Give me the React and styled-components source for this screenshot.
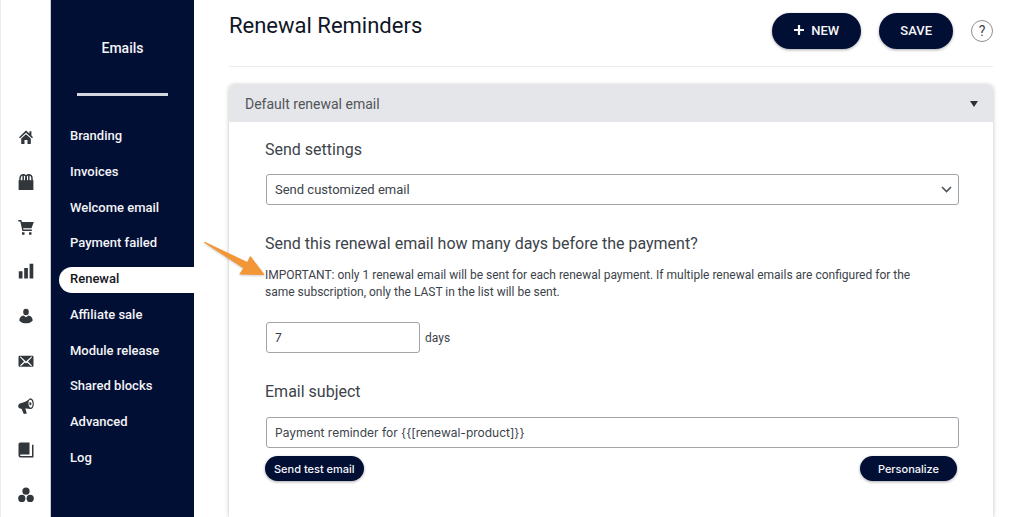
import React, { useState } from 'react';
import styled, { createGlobalStyle } from 'styled-components';

const navy = '#020f35';
const ink = '#3c434a';
const sans = `Roboto, 'Liberation Sans', sans-serif`;
const inter = `Inter, Roboto, sans-serif`;

const GlobalStyle = createGlobalStyle`
  *, *::before, *::after { box-sizing: border-box; }
  body { margin: 0; background: #fff; color: ${ink}; font-family: ${sans}; font-size: 12px; }
  h1, h2, h3, p, ul { margin: 0; padding: 0; }
  ul { list-style: none; }
`;

const Page = styled.div`
  display: grid;
  grid-template-columns: 51px 143px minmax(0, 1fr);
  min-height: 100vh;
`;

const Rail = styled.nav`
  border-left: 1px solid #ececee;
  border-right: 1px solid #c9ccd2;
  padding-top: 129px;
`;

const RailList = styled.ul`
  display: flex;
  flex-direction: column;
  justify-content: space-between;
  align-items: center;
  height: 374px;
`;

const RailLink = styled.a`
  display: block;
  width: 16px;
  height: 16px;
  color: #32373c;

  svg { display: block; width: 16px; height: 16px; fill: currentColor; }
`;

const Sidebar = styled.aside`
  background: ${navy};
  color: #f3f4f6;
  padding-top: 38px;
`;

const SidebarTitle = styled.h2`
  font-size: 14px;
  font-weight: 500;
  line-height: 20px;
  text-align: center;
`;

const SidebarRule = styled.div`
  height: 3px;
  margin: 35px 26px 28px;
  background: #d3d6dc;
`;

const MenuList = styled.ul`
  display: flex;
  flex-direction: column;
  justify-content: space-between;
  height: 348px;
  padding-left: 8px;
`;

const MenuLink = styled.a`
  display: block;
  height: 26px;
  padding-left: 11px;
  border-radius: 13px 0 0 13px;
  background: ${(p) => (p.$active ? '#fff' : 'transparent')};
  color: ${(p) => (p.$active ? '#15171c' : '#f3f4f6')};
  font-size: 13px;
  font-weight: 500;
  line-height: 24px;
  text-decoration: none;
`;

const Main = styled.main`
  display: flex;
  flex-direction: column;
  padding: 0 31px 0 35px;
`;

const Header = styled.header`
  display: flex;
  justify-content: space-between;
  height: 67px;
  padding-top: 12px;
  border-bottom: 1px solid #ebebed;
`;

const Title = styled.h1`
  font-size: 22px;
  font-weight: 400;
  line-height: 28px;
  color: #101626;
`;

const Actions = styled.div`
  display: flex;
  align-items: center;
  gap: 18px;
  height: 37px;
`;

const Pill = styled.button`
  display: inline-flex;
  align-items: center;
  justify-content: center;
  gap: 7px;
  height: ${(p) => (p.$small ? '25px' : '36px')};
  padding: 0 ${(p) => p.$pad}px;
  border: 0;
  border-radius: 18px;
  background: ${navy};
  color: #f6f7f9;
  font-family: ${(p) => (p.$small ? inter : sans)};
  font-size: ${(p) => (p.$small ? '11px' : '13px')};
  font-weight: 500;
  box-shadow: 0 1px 3px rgba(0, 0, 0, 0.35);
  cursor: pointer;
`;

const Help = styled.button`
  width: 22px;
  height: 22px;
  padding: 0;
  border: 1px solid #8c8f94;
  border-radius: 50%;
  background: #fff;
  color: ${ink};
  font-family: ${sans};
  font-size: 14px;
  line-height: 20px;
`;

const Card = styled.section`
  flex: 1;
  margin-top: 18px;
  border-radius: 5px 5px 0 0;
  box-shadow: 0 0 4px rgba(0, 0, 0, 0.25);
`;

const CardHeader = styled.button`
  display: flex;
  align-items: center;
  justify-content: space-between;
  width: 100%;
  height: 37px;
  padding: 0 15px 0 16px;
  border: 0;
  border-radius: 5px 5px 0 0;
  background: #e5e6e9;
  color: #50555b;
  font-family: ${sans};
  font-size: 14px;
  cursor: pointer;
`;

const CardBody = styled.div`
  padding: 18px 34px 32px 36px;
`;

const Label = styled.label`
  display: block;
  font-size: 16px;
  line-height: 20px;
  color: ${ink};
`;

const Field = styled.input`
  display: block;
  width: ${(p) => (p.$short ? '154px' : '100%')};
  height: 31px;
  padding: 0 8px;
  border: 1px solid #a0a3a8;
  border-radius: 3px;
  background: #fff;
  color: ${ink};
  font-family: ${inter};
  font-size: 12px;
`;

const FieldRow = styled.div`
  display: flex;
  align-items: center;
  gap: 5px;
  margin: ${(p) => p.$space};
  padding-left: 1px;
`;

const SelectBox = styled.div`
  display: grid;
  align-items: center;
  width: 100%;

  > * { grid-area: 1 / 1; }
  svg { justify-self: end; margin-right: 7px; pointer-events: none; }
`;

const Select = styled(Field)`
  appearance: none;
  font-family: ${sans};
  font-size: 13px;
`;

const Note = styled.p`
  position: relative;
  margin-top: 13px;
  padding-right: 20px;
  line-height: 17px;
`;

const Pointer = styled.svg`
  position: absolute;
  left: -63px;
  top: -28px;
  filter: drop-shadow(0 1px 1px rgba(0, 0, 0, 0.2));
`;

const Footer = styled.div`
  display: flex;
  justify-content: space-between;
  padding-right: 2px;
`;

const railIcons = [
  ['Home', <path d="M8 1.5 1 8.2l1 1.1L8 3.8l6 5.500 1-1.100-1.600-1.600V2.200h-2v2.400zM3.200 9.600 8 5.200l4.800 4.400V15H9.500v-4h-3v4H3.200z" />],
  ['Products', <><path d="M.6 6.200h14.800V16H.6z" /><path d="M2 7V4.600C2 2 3.400.8 5.300.8S8.300 2 8.300 4.600V7M7.700 7V4.600C7.700 2 8.800.8 10.700.8S14 2 14 4.600V7M5.200 7V1.500M10.800 7V1.500" fill="none" stroke="currentColor" strokeWidth="1.500" /></>],
  ['Orders', <path d="M.3 1h3l.7 2h11.800l-2.300 6.300H5.100l.4 1.200h8.300V12H4.400L2.300 2.500h-2zM4 13.200h2.500v2.500H4zM11 13.200h2.500v2.500H11z" />],
  ['Reports', <path d="M.8 8.200h3.700v7.300H.8zM6.200 5h3.700v10.500H6.200zM11.600.8h3.700v14.700h-3.700z" />],
  ['Customers', <><ellipse cx="8" cy="4" rx="2.800" ry="3.300" /><path d="M1.300 12.500c0-3 2-4.600 4.200-4.900L8 9.200l2.500-1.600c2.200.3 4.200 1.900 4.200 4.900-1.500 2-4 2.800-6.700 2.800s-5.200-.8-6.700-2.800z" /></>],
  ['Emails', <path fillRule="evenodd" d="M1.800 2.800h12.400c.8 0 1.300.5 1.300 1.300v8.300c0 .8-.5 1.300-1.300 1.300H1.800c-.8 0-1.300-.5-1.300-1.300V4.100c0-.8.5-1.300 1.300-1.300zM1.800 4l4.200 4.500-4 4 .8.700L7 9.500l1 .9 1-.9 4.200 3.700.8-.7-4-4L14.200 4l-.8-.4L8 8.500 2.600 3.600z" />],
  ['Affiliates', <path fillRule="evenodd" d="M11.800.4c2.300-.4 3.900 2 4 5 .1 3-1.200 5.500-3.300 5.700-2-.4-3.300-.8-5.200-.6l1.500 4.900-3 .6-2.300-5.300C1.500 10.800.2 9.800.2 8.200c0-1.400.8-2.500 2.200-3C6.300 4.500 9.300 3 11.800.4zm.5 1.400c-1.400.2-2 2-1.800 4.300.2 2.200 1.100 3.700 2.300 3.600 1.200-.1 1.900-1.900 1.800-4.200-.1-2.200-1.100-3.800-2.300-3.700zm-.9 2.500c1.300-.3 2.100.4 2.100 1.400s-.8 1.600-2 1.500z" />],
  ['Modules', <path d="M2.300.5h9.200v12H3c-.6 0-1 .3-1 .8s.4.8 1 .8h11V2.800h1.500v12.700H3c-1.500 0-2.500-.9-2.500-2.300V2.500c0-1.200.7-2 1.800-2z" />],
  ['Community', <><circle cx="8" cy="4.200" r="3.600" /><circle cx="3.800" cy="11.400" r="3.600" /><circle cx="12.200" cy="11.400" r="3.600" /></>],
];

const menu = ['Branding', 'Invoices', 'Welcome email', 'Payment failed', 'Renewal', 'Affiliate sale', 'Module release', 'Shared blocks', 'Advanced', 'Log'];

export default function App() {
  const [days, setDays] = useState('7');
  const [subject, setSubject] = useState('Payment reminder for {{[renewal-product]}}');

  return (
    <>
      <GlobalStyle />
      <Page>
        <Rail aria-label="Sections">
          <RailList>
            {railIcons.map(([name, shape]) => (
              <li key={name}>
                <RailLink href="#" aria-label={name}>
                  <svg viewBox="0 0 16 16" aria-hidden="true">{shape}</svg>
                </RailLink>
              </li>
            ))}
          </RailList>
        </Rail>

        <Sidebar>
          <SidebarTitle>Emails</SidebarTitle>
          <SidebarRule />
          <nav>
            <MenuList>
              {menu.map((item) => (
                <li key={item}>
                  <MenuLink href="#" $active={item === 'Renewal'}>{item}</MenuLink>
                </li>
              ))}
            </MenuList>
          </nav>
        </Sidebar>

        <Main>
          <Header>
            <Title>Renewal Reminders</Title>
            <Actions>
              <Pill type="button" $pad={22}>
                <svg width="10" height="12" viewBox="0 0 10 12" aria-hidden="true">
                  <path d="M5 0v10M0 5h10" stroke="currentColor" strokeWidth="2.200" />
                </svg>
                NEW
              </Pill>
              <Pill type="button" $pad={21}>SAVE</Pill>
              <Help type="button">?</Help>
            </Actions>
          </Header>

          <Card>
            <CardHeader type="button" aria-expanded="true">
              Default renewal email
              <svg width="8" height="6" viewBox="0 0 8 6" aria-hidden="true">
                <path d="M0 0h8L4 6z" fill="#2c3036" />
              </svg>
            </CardHeader>
            <CardBody>
              <Label htmlFor="mode">Send settings</Label>
              <FieldRow $space="14px 0 29px">
                <SelectBox>
                  <Select as="select" id="mode">
                    <option>Send customized email</option>
                  </Select>
                  <svg width="11" height="7" viewBox="0 0 11 7" aria-hidden="true">
                    <path d="M1 1l4.500 4.500L10 1" fill="none" stroke="#50575e" strokeWidth="1.700" />
                  </svg>
                </SelectBox>
              </FieldRow>

              <Label htmlFor="days">Send this renewal email how many days before the payment?</Label>
              <Note>
                IMPORTANT: only 1 renewal email will be sent for each renewal payment. If multiple renewal emails are configured for the same subscription, only the LAST in the list will be sent.
                <Pointer width="64" height="40" viewBox="0 0 64 40" aria-hidden="true">
                  <path d="M3.200 3c-.8-.5-1.500.6-.7 1.100L41.300 29.200l-3.600 5.300c-.3.600 0 1 .6 1L61.500 36c.6 0 .9-.4.600-.9L49 17.700c-.5-.6-1-.5-1.300.1L45.300 23z" fill="#f39637" />
                </Pointer>
              </Note>
              <FieldRow $space="21px 0 29px">
                <Field id="days" $short value={days} onChange={(e) => setDays(e.target.value)} />
                <label htmlFor="days">days</label>
              </FieldRow>

              <Label htmlFor="subject">Email subject</Label>
              <FieldRow $space="15px 0 8px">
                <Field id="subject" value={subject} onChange={(e) => setSubject(e.target.value)} />
              </FieldRow>
              <Footer>
                <Pill type="button" $small $pad={9}>Send test email</Pill>
                <Pill type="button" $small $pad={18}>Personalize</Pill>
              </Footer>
            </CardBody>
          </Card>
        </Main>
      </Page>
    </>
  );
}
